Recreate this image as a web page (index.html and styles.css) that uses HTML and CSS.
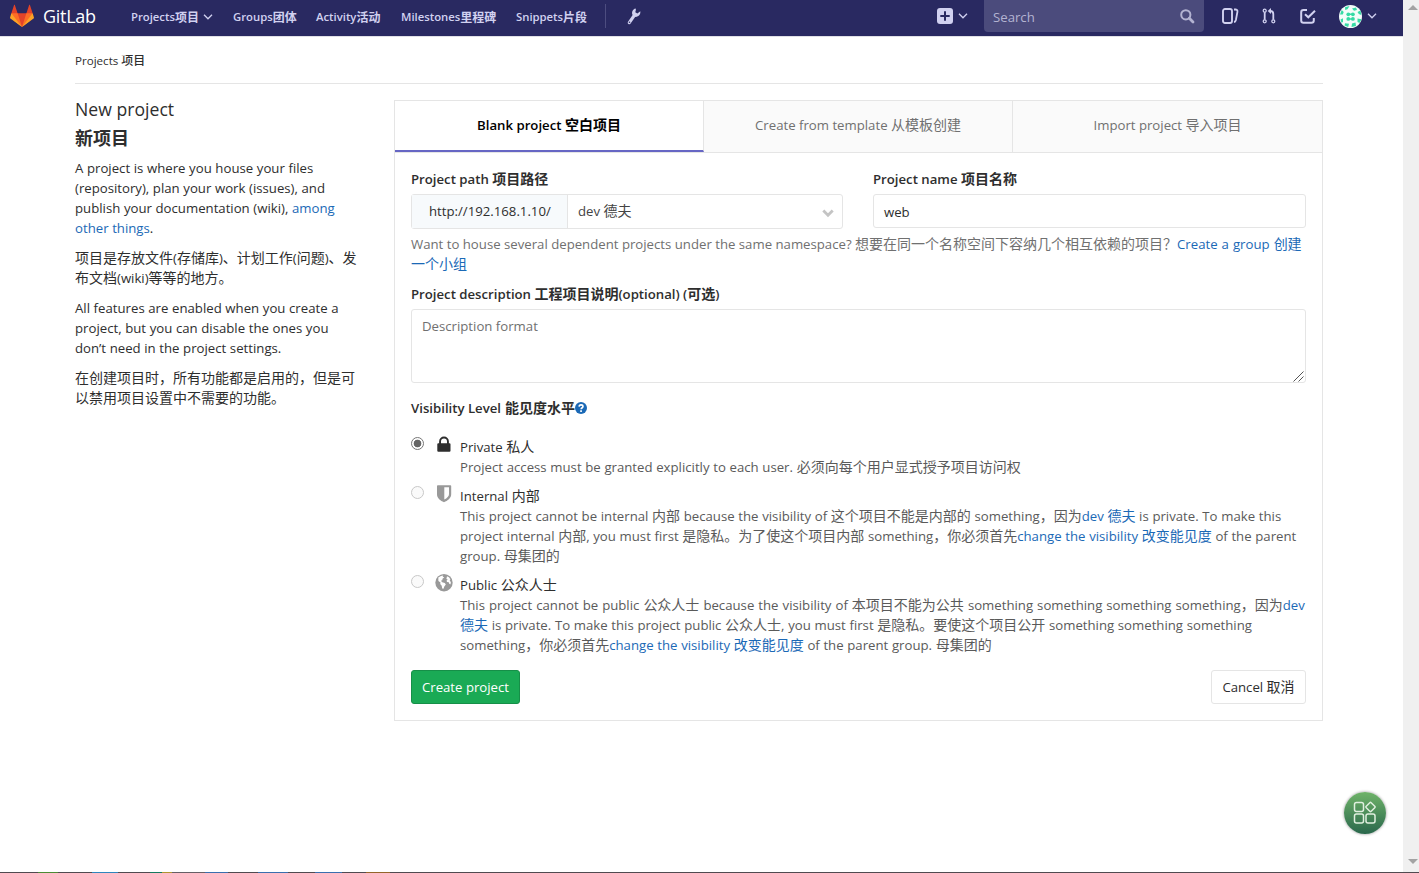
FILE: index.html
```html
<!DOCTYPE html>
<html lang="en">
<head>
<meta charset="utf-8">
<title>New project · GitLab</title>
<link rel="stylesheet" href="styles.css">
</head>
<body>
<div class="window">
  <div class="page">
    <header class="navbar">
      <a class="brand">
        <svg width="24" height="24" viewBox="0 0 36 36"><path fill="#e24329" d="M2 14l9.38 9v-9l-4-12.28c-.205-.632-1.176-.632-1.38 0z"/><path fill="#e24329" d="M34 14l-9.38 9v-9l4-12.28c.205-.632 1.176-.632 1.38 0z"/><path fill="#e24329" d="M18 34.38 3 14 33 14Z"/><path fill="#fc6d26" d="M18 34.38 11.38 14 2 14 6 25Z"/><path fill="#fc6d26" d="M18 34.38 24.62 14 34 14 30 25Z"/><path fill="#fca326" d="M2 14L.1 20.16c-.18.565 0 1.2.5 1.56l17.42 12.66z"/><path fill="#fca326" d="M34 14l1.9 6.16c.18.565 0 1.2-.5 1.56L18 34.38z"/></svg>
        <span class="wordmark">GitLab</span>
      </a>
      <nav class="menu">
        <a class="m-projects">Projects<span class="zh">项目</span><svg class="caret" width="10" height="6" viewBox="0 0 10 6"><path d="M1 .8 5 4.8 9 .8"/></svg></a>
        <a class="m-groups">Groups<span class="zh">团体</span></a>
        <a class="m-activity">Activity<span class="zh">活动</span></a>
        <a class="m-milestones">Milestones<span class="zh">里程碑</span></a>
        <a class="m-snippets">Snippets<span class="zh">片段</span></a>
      </nav>
      <a class="admin"><svg width="14" height="17" viewBox="0 0 14 17"><path fill="none" stroke="#d1d1f0" stroke-width="3.2" stroke-linecap="round" d="M2.300 14.600 7.300 7.400"/><path fill="#d1d1f0" d="M8.600.5C5.600 1.200 4.500 4.200 5.400 6.600c1 2.400 4 3 6 1.500 1.600-1.200 2.200-3 1.900-4.800L10.400 5.600 8.300 4.300 8.900 1.800z"/><circle cx="2.500" cy="14.300" r=".8" fill="#292961"/></svg></a>
      <div class="tools">
        <a class="plus"><svg width="16" height="16" viewBox="0 0 16 16"><rect width="16" height="16" rx="3" fill="#d1d1f0"/><path d="M8 3.300v9.400M3.300 8h9.400" stroke="#292961" stroke-width="2"/></svg><svg class="caret" width="10" height="6" viewBox="0 0 10 6"><path d="M1 .8 5 4.800 9 .8"/></svg></a>
        <div class="search"><span>Search</span><svg width="15" height="15" viewBox="0 0 15 15" fill="none" stroke="#b3b3d1"><circle cx="5.800" cy="5.800" r="4.600" stroke-width="2"/><path d="M9.300 9.300 13 13" stroke-width="2.800" stroke-linecap="round"/></svg></div>
        <a class="issues"><svg width="17" height="16" viewBox="0 0 17 16" fill="none" stroke="#d1d1f0" stroke-width="1.900"><rect x="1" y="1" width="9" height="14" rx="2"/><path d="M12 1.500h1.700c1.500.2 2 1 1.700 2.500l-1.500 8c-.3 1.300-.9 1.900-1.900 2" stroke-width="1.800"/></svg></a>
        <a class="merge"><svg width="14" height="16" viewBox="0 0 14 16" fill="none" stroke="#d1d1f0" stroke-width="1.300"><circle cx="2.700" cy="2.700" r="1.500"/><circle cx="2.700" cy="13.300" r="1.500"/><circle cx="11.300" cy="13.300" r="1.500"/><path d="M2.700 4.300v7.400M11.300 11.700V6c0-2-1-3-3-3" stroke-width="1.800"/><path d="M9 0v6L5.700 3z" fill="#d1d1f0" stroke="none"/></svg></a>
        <a class="todos"><svg width="16" height="16" viewBox="0 0 16 16" fill="none" stroke="#d1d1f0" stroke-width="2"><path d="M7 2H3.500Q1.200 2 1.200 4.300v8.200q0 2.300 2.300 2.300h8q2.300 0 2.300-2.300V10"/><path d="M5 6.200 8.300 9.300 15 2.700"/></svg></a>
        <a class="user"><svg width="23" height="23" viewBox="0 0 23 23"><circle cx="11.500" cy="11.500" r="11.500" fill="#f3fdf9"/><g fill="#35dba5"><circle cx="9.300" cy="9.300" r="1.900"/><circle cx="13.900" cy="9.300" r="1.900"/><circle cx="9.300" cy="13.900" r="1.900"/><circle cx="13.900" cy="13.900" r="1.900"/><path d="M9.300 8.500h4.600v1.500H9.300zM9.300 13.200h4.600v1.500H9.300zM6 2.200 10.500 1 8.500 4.200 6.200 5zM13 3.500 17 2.500l1 2.500-3 .7zM18.500 7l3-1.500.8 4.500-2.500-1zM18.500 13.500l4 .8-2 3.700-2-1zM13 18.500l3.500-1 .5 3.500-4.500 1zM6 18.300l4 .5-.8 3.200-3.700-1.500zM1.500 14.500 4 13.300v3.700l-1.500.7zM1 9.500l1.700-4.500L4.700 7 3.800 9.500z"/></g></svg><svg class="caret" width="10" height="6" viewBox="0 0 10 6"><path d="M1 .8 5 4.800 9 .8"/></svg></a>
      </div>
    </header>

    <main class="content">
      <div class="breadcrumb">Projects <span class="zh">项目</span></div>
      <div class="columns">
        <aside class="intro">
          <h4>New project<br><span class="zh">新项目</span></h4>
          <p>A project is where you house your files<br>(repository), plan your work (issues), and<br>publish your documentation (wiki), <a>among<br>other things</a>.</p>
          <p><span class="zh">项目是存放文件</span>(<span class="zh">存储库</span>)<span class="zh">、计划工作</span>(<span class="zh">问题</span>)<span class="zh">、发<br>布文档</span>(wiki)<span class="zh">等等的地方。</span></p>
          <p>All features are enabled when you create a<br>project, but you can disable the ones you<br>don’t need in the project settings.</p>
          <p><span class="zh">在创建项目时，所有功能都是启用的，但是可<br>以禁用项目设置中不需要的功能。</span></p>
        </aside>

        <section class="panel">
          <div class="tabs">
            <a class="tab active">Blank project <span class="zh">空白项目</span></a>
            <a class="tab">Create from template <span class="zh">从模板创建</span></a>
            <a class="tab">Import project <span class="zh">导入项目</span></a>
          </div>
          <form class="form">
            <div class="fields">
              <div class="field">
                <label>Project path <span class="zh">项目路径</span></label>
                <div class="group">
                  <span class="addon">http://192.168.1.10/</span>
                  <span class="select"><span>dev <span class="zh">德夫</span></span><svg width="12" height="9" viewBox="0 0 12 9"><path d="M1.300 1.500 6 6.200l4.700-4.700" fill="none" stroke="#c4c4c4" stroke-width="2.800"/></svg></span>
                </div>
              </div>
              <div class="field">
                <label>Project name <span class="zh">项目名称</span></label>
                <div class="input">web</div>
              </div>
            </div>
            <p class="help">Want to house several dependent projects under the same namespace? <span class="zh">想要在同一个名称空间下容纳几个相互依赖的项目？</span><a class="group-link">Create a group <span class="zh">创建<br>一个小组</span></a></p>
            <label class="desc-label">Project description <span class="zh">工程项目说明</span>(optional) (<span class="zh">可选</span>)</label>
            <div class="textarea"><span>Description format</span><svg width="11" height="11" viewBox="0 0 11 11"><path d="M.5 10.500l10-10M5.500 10.500l5-5" stroke="#555" stroke-width="1"/></svg></div>
            <label class="vis-label">Visibility Level <span class="zh">能见度水平</span><svg width="12" height="12" viewBox="0 0 12 12"><circle cx="6" cy="6" r="6" fill="#1b69b6"/><path d="M4.100 4.600c.1-2.400 3.900-2.300 3.900-.1C8 5.800 6.200 5.700 6.100 7.300" fill="none" stroke="#fff" stroke-width="1.600"/><path d="M5.200 8.300h1.700v1.600H5.200z" fill="#fff"/></svg></label>

            <div class="options">
              <div class="option">
                <i class="radio checked"></i>
                <svg class="icon" width="18" height="18" viewBox="0 0 18 18"><path fill="#2e2e2e" d="M2.300 8.200q0-1 1-1h.8V5.400a4.900 4.900 0 0 1 9.800 0v1.800h.6q1 0 1 1v6.600q0 1-1 1H3.300q-1 0-1-1zM6 7.200h6V5.400a3 3 0 0 0-6 0z"/></svg>
                <div class="text"><b>Private <span class="zh">私人</span></b><br>Project access must be granted explicitly to each user. <span class="zh">必须向每个用户显式授予项目访问权</span></div>
              </div>
              <div class="option">
                <i class="radio"></i>
                <svg class="icon" width="18" height="18" viewBox="0 0 18 18"><path fill="#999" fill-rule="evenodd" d="M2.800.2h12.600q.8 0 .8.8v8.200c0 4-3.600 6.400-7.200 8C5.400 15.600 2 13.200 2 9.200V1q0-.8.8-.8zM9.300 2.300v12.300c2.800-1.500 4.700-3.300 4.700-5.600V2.300z"/></svg>
                <div class="text"><b>Internal <span class="zh">内部</span></b><br>This project cannot be internal <span class="zh">内部</span> because the visibility of <span class="zh">这个项目不能是内部的</span> something<span class="zh">，因为</span><a>dev <span class="zh">德夫</span></a> is private. To make this<br>project internal <span class="zh">内部</span>, you must first <span class="zh">是隐私。为了使这个项目内部</span> something<span class="zh">，你必须首先</span><a>change the visibility <span class="zh">改变能见度</span></a> of the parent<br>group. <span class="zh">母集团的</span></div>
              </div>
              <div class="option">
                <i class="radio"></i>
                <svg class="icon" width="18" height="18" viewBox="0 0 18 18"><circle cx="9" cy="8.700" r="8.700" fill="#999"/><path fill="#fff" d="M3.300 3.600 6 2l2.200-.4-.5 1.200 1.600.5-1.800 1.400-.2 1.500-1.400.6 1.300 1.500 2.600.7 1 1.500-1.500 2-.8 2.200-1.300-.2-.5-2.800-1.500-1.600.3-1.600L3.400 7zM12 2.300l2 1 1.400 1.900-.7 1.200.9 1.300.3 1-.6 1.900-1.200-1-.3-1.300-1.700-.2-.6-1.300 1.200-1.300-1.300-.6z"/></svg>
                <div class="text"><b>Public <span class="zh">公众人士</span></b><br><span class="wide">This project cannot be public <span class="zh">公众人士</span> because the visibility of <span class="zh">本项目不能为公共</span> something something something something<span class="zh">，因为</span></span><a>dev<br><span class="zh">德夫</span></a> is private. To make this project public <span class="zh">公众人士</span>, you must first <span class="zh">是隐私。要使这个项目公开</span> something something something<br>something<span class="zh">，你必须首先</span><a>change the visibility <span class="zh">改变能见度</span></a> of the parent group. <span class="zh">母集团的</span></div>
              </div>
            </div>

            <div class="actions">
              <a class="btn create">Create project</a>
              <a class="btn cancel">Cancel <span class="zh">取消</span></a>
            </div>
          </form>
        </section>
      </div>
    </main>
  </div>
  <div class="scrollbar"><i class="up"></i><i class="down"></i></div>
  <div class="fab"><svg width="24" height="24" viewBox="0 0 24 24" fill="none" stroke="#e0efdf" stroke-width="1.500"><rect x="1.500" y="1.500" width="9" height="9" rx="2"/><rect x="1.500" y="13" width="9" height="9" rx="2"/><rect x="13" y="13" width="9" height="9" rx="2"/><rect x="14" y="2.500" width="7" height="7" rx="1" transform="rotate(45 17.500 6)"/></svg></div>
  <div class="taskbar-edge"></div>
</div>
</body>
</html>
```
FILE: styles.css
```css
* { box-sizing: border-box; }
body {
  margin: 0;
  font: 13.2px/20px "Open Sans", "Noto Sans CJK SC", sans-serif;
  color: #2e2e2e;
  background: #fff;
}
.zh { font-family: "Noto Sans CJK SC", sans-serif; font-size: 14px; font-weight: 400; line-height: 0; }
svg { display: block; flex: none; }
a { color: #1b69b6; text-decoration: none; }
.window {
  position: relative;
  display: flex;
  height: 873px;
  overflow: hidden;
}
.page { flex: 1; min-width: 0; }

/* Navigation bar */
.navbar {
  display: flex;
  height: 36px;
  background: #292961;
  box-shadow: 0 1px 0 #e0e0e6;
  align-items: center;
  padding: 0 26px 4px 10px;
}
.navbar a { display: flex; align-items: center; color: #d1d1f0; }
.brand { width: 121px; gap: 9px; }
.navbar .wordmark { color: #fff; font-size: 18px; letter-spacing: -.3px; }
.menu { display: flex; padding-top: 2px; font-size: 11.3px; font-weight: 600; white-space: nowrap; }
.menu .zh { font-size: 12px; font-weight: 700; }
.caret { fill: none; stroke: #d1d1f0; stroke-width: 1.300; }
.m-projects { width: 102px; }
.m-projects .caret { margin-left: 4px; }
.m-groups { width: 83px; }
.m-activity { width: 85px; }
.m-milestones { width: 115px; }
.m-snippets { width: 89px; }
.admin { height: 24px; border-left: 1px solid #4d4d80; padding-left: 21px; }
.tools { display: flex; align-items: center; margin-left: auto; }
.plus { gap: 5px; width: 47px; }
.search {
  display: flex;
  justify-content: space-between;
  align-items: center;
  width: 220px;
  height: 32px;
  margin-right: 18px;
  padding: 2px 9px 0 9px;
  border-radius: 0 0 4px 4px;
  background: #4b4b7c;
  color: #b3b3d1;
}
.search svg { margin-top: -2px; }
.issues { width: 40px; }
.merge { width: 38px; }
.todos { width: 39px; }
.user { gap: 5px; }

/* Page body */
.content { width: 1249px; margin-left: 74px; }
.breadcrumb {
  height: 48px;
  margin-left: 1px;
  padding-top: 15px;
  border-bottom: 1px solid #e5e5e5;
  font-size: 11.6px;
  font-weight: 500;
}
.breadcrumb .zh { font-size: 12px; font-weight: 500; }
.columns { display: flex; padding-top: 16px; }
.intro { width: 320px; padding-left: 1px; white-space: nowrap; word-spacing: .2px; }
.intro h4 { margin: -5px 0 5px; font-size: 17.6px; font-weight: 500; line-height: 29px; }
.intro h4 .zh { font-size: 18px; font-weight: 700; }
.intro p { margin: 0 0 10px; }

.panel { flex: 1; height: 621px; border: 1px solid #e5e5e5; }
.tabs { display: grid; grid-template-columns: 309px 309px 1fr; height: 52px; border-bottom: 1px solid #e5e5e5; }
.tab {
  padding-top: 14px;
  border-right: 1px solid #e5e5e5;
  background: #fafafa;
  color: #707070;
  text-align: center;
}
.tab:last-child { border-right: 0; }
.tab.active { background: #fff; color: #000; font-weight: 600; border-bottom: 2px solid #6666c4; }
.form { padding: 16px 16px 0; }
label { display: block; font-weight: 600; }
label .zh, .tab.active .zh { font-weight: 600; }
.fields { display: grid; grid-template-columns: 432px 433px; gap: 30px; }
.group, .input { margin-top: 5px; border: 1px solid #e5e5e5; border-radius: 3px; }
.group { display: flex; height: 35px; }
.addon { width: 156px; padding: 6px 0 0 17px; background: #f7fafc; border-right: 1px solid #e5e5e5; }
.select { flex: 1; display: flex; justify-content: space-between; padding: 6px 8px 0 10px; color: #444; }
.select svg { margin-top: 8px; }
.input { height: 34px; padding: 7px 10px; }
.help { margin: 5px 0 10px; color: #707070; white-space: nowrap; }
.group-link { word-spacing: .6px; }
.textarea {
  display: flex;
  justify-content: space-between;
  height: 74px;
  margin: 5px 0 15px;
  padding: 6px 1px 0 10px;
  border: 1px solid #e5e5e5;
  border-radius: 3px;
  color: #707070;
}
.textarea svg { align-self: flex-end; }
.vis-label { display: flex; align-items: center; }
.vis-label .zh { line-height: 18px; margin: -2px 0 0 4px; }
.options { display: grid; gap: 9px; padding-top: 19px; }
.option { display: grid; grid-template-columns: 24px 25px 1fr; }
.option .icon { margin-top: -1px; }
.radio { width: 13px; height: 13px; border: 1px solid #c8c8c8; border-radius: 50%; background: #fafafa; }
.radio.checked { border-color: #767676; background: radial-gradient(circle, #666 0 3.500px, #fff 4.200px); }
.text { color: #5a5a5a; white-space: nowrap; word-spacing: .25px; }
.text .wide { word-spacing: .6px; }
.text b { color: #2e2e2e; font-weight: 400; }
.actions { display: flex; justify-content: space-between; margin-top: 15px; }
.btn { height: 34px; padding: 6px 0; border: 1px solid #e5e5e5; border-radius: 3px; text-align: center; color: #2e2e2e; }
.btn.create { width: 109px; background: #1aaa55; border-color: #168f48; color: #fff; }
.cancel { width: 95px; }

/* Window chrome */
.scrollbar {
  display: flex;
  flex-direction: column;
  justify-content: space-between;
  align-items: center;
  width: 16px;
  padding: 5px 0 9px 4px;
  background: #f0f0f0;
}
.scrollbar i { border: 5px solid transparent; }
.scrollbar .up { border-top: 0; border-bottom-color: #a3a3a3; }
.scrollbar .down { border-bottom: 0; border-top-color: #a3a3a3; }
.fab {
  position: absolute;
  left: 1344px;
  top: 792px;
  display: grid;
  place-items: center;
  width: 42px;
  height: 42px;
  border-radius: 50%;
  background: linear-gradient(#6fb369, #2a684c);
  box-shadow: 0 0 3px rgba(0, 0, 0, .45);
}
.taskbar-edge {
  position: absolute;
  inset: 872px 0 0;
  background: linear-gradient(90deg, #504a50 38px, #4c8b35 38px 58px, #504a50 58px 92px, #2f86bd 92px 118px, #504a50 118px 150px, #16795f 150px 162px, #b0942f 162px 172px, #665f66 172px 205px, #3a6fae 205px 228px, #504a50 228px 258px, #3a6fae 258px 288px, #504a50 288px 315px, #3a6fae 315px 342px, #504a50 342px 366px, #94652a 366px 390px, #504a50 390px);
}
```
